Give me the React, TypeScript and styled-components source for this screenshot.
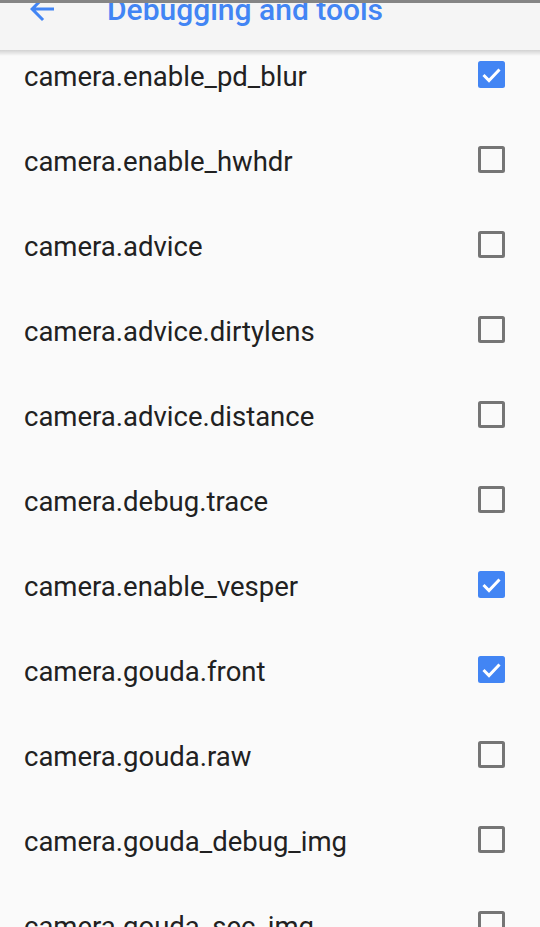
import React from "react";
import { styled, createGlobalStyle } from "styled-components";

const flags: { name: string; checked: boolean }[] = [
    { name: "camera.enable_pd_blur", checked: true },
    { name: "camera.enable_hwhdr", checked: false },
    { name: "camera.advice", checked: false },
    { name: "camera.advice.dirtylens", checked: false },
    { name: "camera.advice.distance", checked: false },
    { name: "camera.debug.trace", checked: false },
    { name: "camera.enable_vesper", checked: true },
    { name: "camera.gouda.front", checked: true },
    { name: "camera.gouda.raw", checked: false },
    { name: "camera.gouda_debug_img", checked: false },
    { name: "camera.gouda_sec_img", checked: false },
];

export default function App() {
    return (
        <>
            <GlobalStyle />
            <Screen>
                <StatusStrip />
                <AppBar>
                    <BackButton>
                        <svg width="36" height="36" viewBox="0 0 24 24">
                            <path
                                d="M20 11H7.83l5.59-5.59L12 4l-8 8 8 8 1.41-1.41L7.83 13H20v-2z"
                                fill="#4285f4"
                            />
                        </svg>
                    </BackButton>
                    <Title>Debugging and tools</Title>
                </AppBar>
                <Viewport>
                    <Shadow />
                    <List>
                        {flags.map((flag) => (
                            <Row key={flag.name}>
                                <Label>{flag.name}</Label>
                                <Checkbox $checked={flag.checked}>
                                    {flag.checked && (
                                        <svg width="27" height="27" viewBox="0 0 27 27">
                                            <polyline
                                                points="5.5,14 11,19.5 21.5,8.5"
                                                fill="none"
                                                stroke="#ffffff"
                                                strokeWidth="3"
                                            />
                                        </svg>
                                    )}
                                </Checkbox>
                            </Row>
                        ))}
                    </List>
                </Viewport>
            </Screen>
        </>
    );
}

const GlobalStyle = createGlobalStyle`
    html, body {
        margin: 0;
        padding: 0;
        background: #fafafa;
    }

    body {
        font-family: Roboto, "Noto Sans", sans-serif;
    }
`;

const Screen = styled.div`
    width: 540px;
    height: 927px;

    display: flex;
    flex-direction: column;

    background-color: #fafafa;
    overflow: hidden;
`;

const StatusStrip = styled.div`
    height: 3px;
    flex-shrink: 0;

    background-color: #858585;
`;

const AppBar = styled.div`
    height: 47px;
    flex-shrink: 0;

    display: flex;
    align-items: flex-start;

    background-color: #f5f5f5;
    overflow: hidden;
`;

const BackButton = styled.div`
    width: 36px;
    height: 36px;
    margin-left: 24px;
    margin-top: -12px;
    flex-shrink: 0;
`;

const Title = styled.div`
    margin-left: 47px;
    margin-top: -8px;

    color: #4285f4;
    font-family: Roboto, sans-serif;
    font-size: 30px;
    font-weight: 500;
    line-height: 30px;
    white-space: nowrap;
`;

const Viewport = styled.div`
    position: relative;
    flex: 1;

    overflow: hidden;
`;

const Shadow = styled.div`
    position: absolute;
    top: 0;
    left: 0;
    right: 0;
    height: 6px;
    z-index: 1;

    background: linear-gradient(rgba(0, 0, 0, 0.16), rgba(0, 0, 0, 0));
`;

const List = styled.div`
    display: flex;
    flex-direction: column;

    margin-top: -18px;
`;

const Row = styled.div`
    height: 85px;

    display: flex;
    align-items: center;
    justify-content: space-between;

    padding: 0 35px 0 24px;
`;

const Label = styled.div`
    padding-top: 4px;

    color: #212121;
    font-family: Roboto, sans-serif;
    font-size: 27.5px;
    font-weight: 400;
    white-space: nowrap;
`;

const Checkbox = styled.div<{ $checked: boolean }>`
    width: 27px;
    height: 27px;
    box-sizing: border-box;
    flex-shrink: 0;

    border-radius: 2.5px;
    border: ${(props) => (props.$checked ? "none" : "3px solid #757575")};
    background-color: ${(props) => (props.$checked ? "#4285f4" : "transparent")};

    svg {
        display: block;
    }
`;
